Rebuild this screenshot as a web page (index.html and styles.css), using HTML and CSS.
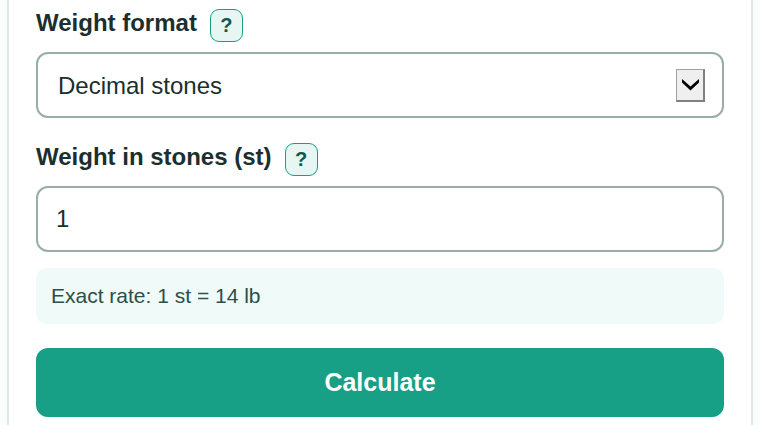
FILE: index.html
```html
<!DOCTYPE html>
<html lang="en">
<head>
	<meta charset="utf-8">
	<meta name="viewport" content="width=device-width, initial-scale=1">
	<title>Stones to pounds</title>
	<link rel="stylesheet" href="styles.css">
</head>
<body>
	<form class="card">
		<div class="field">
			<div class="label-row">
				<label for="format">Weight format</label>
				<button type="button" class="help">?</button>
			</div>
			<div class="select-wrap">
				<select id="format" class="control">
					<option>Decimal stones</option>
				</select>
				<span class="arrow">
					<svg width="17" height="14" viewBox="0 0 17 14"><path d="M0 1l8.500 7.500L17 1v3.500L8.500 12.500 0 4.500z"/></svg>
				</span>
			</div>
		</div>
		<div class="field">
			<div class="label-row">
				<label for="stones">Weight in stones (st)</label>
				<button type="button" class="help">?</button>
			</div>
			<input id="stones" class="control" type="text" inputmode="decimal" value="1">
		</div>
		<p class="rate">Exact rate: 1 st = 14 lb</p>
		<button type="button" class="submit">Calculate</button>
	</form>
</body>
</html>
```

FILE: styles.css
```css
* {
	box-sizing: border-box;
}
body {
	margin: 0;
	padding: 0 7px;
	background: #fafdfc;
	color: #1b2f2d;
	font-family: "Liberation Sans", Arial, sans-serif;
	font-size: 24px;
}
.card {
	min-height: 100vh;
	padding: 9px 27px 8px;
	border: solid #dce8e5;
	border-width: 0 2px;
	background: #fff;
}
.field {
	margin-bottom: 25px;
}
.label-row {
	display: flex;
	align-items: flex-start;
	gap: 13px;
	margin-bottom: 10px;
	font-weight: bold;
	line-height: 28px;
}
.help {
	width: 33px;
	height: 33px;
	padding: 0;
	border: 1px solid #17a086;
	border-radius: 9px;
	background: #e8f6f3;
	color: #0e5a4c;
	font: bold 20px "Liberation Sans", Arial, sans-serif;
}
.control {
	display: block;
	width: 100%;
	height: 66px;
	padding: 0 18px;
	border: 2px solid #9aaca8;
	border-radius: 12px;
	background: #fff;
	color: inherit;
	font: inherit;
}
select.control {
	appearance: none;
	padding-left: 20px;
}
.select-wrap {
	position: relative;
}
/* boxed arrow on top of the select */
.arrow {
	position: absolute;
	top: 17px;
	right: 19px;
	display: flex;
	align-items: center;
	justify-content: center;
	width: 29px;
	height: 33px;
	border: solid;
	border-width: 1px 2px 2px 1px;
	border-color: #a0a0a0 #808080 #808080 #a0a0a0;
	background: #efefef;
	pointer-events: none;
}
.rate {
	margin: -9px 0 24px;
	padding: 14px 15px;
	border-radius: 10px;
	background: #f0faf8;
	color: #2b4f49;
	font-size: 21px;
	line-height: 28px;
}
.submit {
	display: block;
	width: 100%;
	height: 69px;
	border: 0;
	border-radius: 12px;
	background: #17a086;
	color: #fff;
	font: bold 25px "Liberation Sans", Arial, sans-serif;
}
```
